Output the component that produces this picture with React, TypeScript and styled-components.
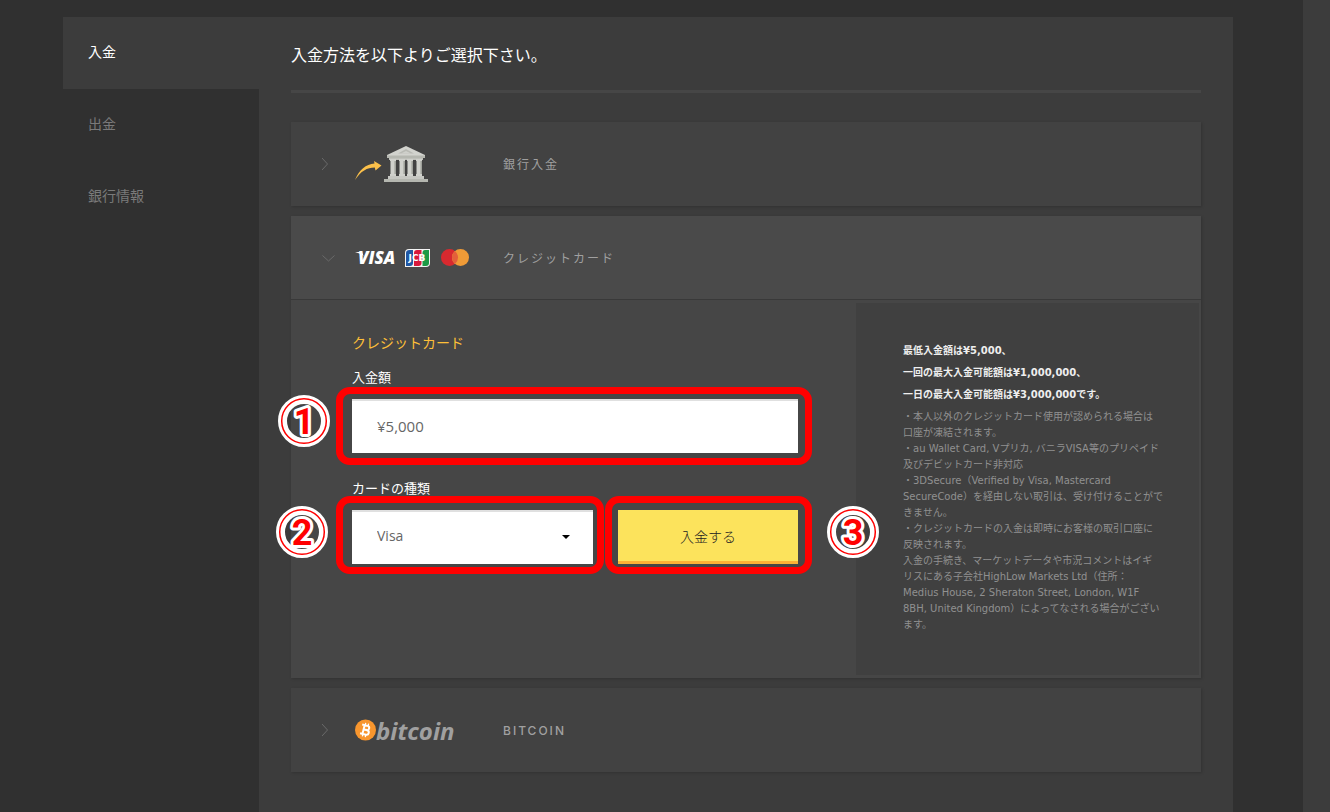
import React from 'react';
import styled, { createGlobalStyle } from 'styled-components';

const jp = `"DejaVu Sans", "Noto Sans CJK JP", sans-serif`;
const ui = `"Open Sans", "Noto Sans CJK JP", sans-serif`;

const GlobalStyle = createGlobalStyle`
  *, *::before, *::after { box-sizing: border-box; }
  body { margin: 0; background: #303030; font-family: ${ui}; color: #fff; }
  h1, h2, p, ul { margin: 0; padding: 0; }
`;

const Page = styled.div`
  display: flex;
  min-height: 100vh;
`;

const Main = styled.div`
  flex: 1;
  display: flex;
  padding: 17px 70px 0 63px;
`;

const EdgeStrip = styled.div`
  width: 27px;
  background: #3c3c3c;
`;

const SideNav = styled.nav`
  flex: 0 0 196px;
  display: flex;
  flex-direction: column;
`;

const NavLink = styled.a<{ $active?: boolean }>`
  height: 72px;
  line-height: 70px;
  padding-left: 25px;
  font-size: 14px;
  text-decoration: none;
  color: ${(p) => (p.$active ? '#fff' : '#7a7a7a')};
  background: ${(p) => (p.$active ? '#3c3c3c' : 'transparent')};
`;

const Content = styled.main`
  flex: 1;
  min-width: 0;
  background: #3c3c3c;
  padding: 0 32px 40px;
`;

const Title = styled.h1`
  height: 76px;
  line-height: 76px;
  border-bottom: 3px solid #464646;
  margin-bottom: 29px;
  font-size: 16px;
  font-weight: 400;
`;

const Methods = styled.div`
  display: flex;
  flex-direction: column;
  gap: 10px;
`;

const Method = styled.section`
  background: #424242;
  box-shadow: 1px 1px 2px #333;
`;

const MethodHeader = styled.button<{ $open?: boolean }>`
  display: grid;
  grid-template-columns: 33px 148px 1fr;
  align-items: center;
  width: 100%;
  height: 84px;
  padding: 0 0 0 31px;
  border: 0;
  border-bottom: ${(p) => (p.$open ? '1px solid #393939' : '0')};
  background: ${(p) => (p.$open ? '#4a4a4a' : '#424242')};
  color: #a0a0a0;
  font-family: ${ui};
  text-align: left;
`;

const MethodName = styled.span<{ $latin?: boolean }>`
  font-family: ${(p) => (p.$latin ? 'Inter, sans-serif' : ui)};
  font-size: 12px;
  font-weight: ${(p) => (p.$latin ? 500 : 400)};
  letter-spacing: 2px;
`;

const Logos = styled.span`
  display: flex;
  align-items: center;
`;

const Details = styled.div`
  display: flex;
  justify-content: space-between;
  background: #464646;
  padding: 3px 2px 3px 61px;
`;

const Form = styled.form`
  flex: 0 1 446px;
  padding: 28px 0 0;
`;

const FormTitle = styled.h2`
  height: 24px;
  line-height: 24px;
  margin-bottom: 12px;
  font-size: 14px;
  font-weight: 400;
  color: #fdbf38;
`;

const Label = styled.label`
  display: block;
  height: 20px;
  line-height: 20px;
  margin-bottom: 12px;
  font-size: 13px;
`;

const Marked = styled.div<{ $inset: string }>`
  position: relative;
  &::after {
    content: '';
    position: absolute;
    inset: ${(p) => p.$inset};
    border: 7px solid #f00;
    border-radius: 14px;
    pointer-events: none;
  }
`;

const AmountField = styled(Marked)`
  margin-bottom: 25px;
`;

const FormRow = styled.div`
  display: flex;
  gap: 25px;
`;

const CardField = styled(Marked)`
  flex: 1;
`;

const SubmitField = styled(Marked)`
  flex: 0 0 180px;
`;

const AmountInput = styled.input`
  display: block;
  width: 100%;
  height: 54px;
  padding: 0 25px 2px;
  border: 0;
  border-top: 2px solid #e0e0e0;
  border-radius: 0;
  background: #fff;
  color: #666;
  font: 400 15px ${ui};
`;

const CardSelect = styled.select`
  appearance: none;
  display: block;
  width: 100%;
  height: 54px;
  padding: 0 25px 6px;
  border: 0;
  border-top: 2px solid #e0e0e0;
  border-radius: 0;
  background: #fff;
  color: #666;
  font: 400 14px ${ui};
`;

const Caret = styled.span`
  position: absolute;
  top: 25px;
  right: 23px;
  border: 4px solid transparent;
  border-top-color: #000;
  border-bottom: 0;
`;

const SubmitButton = styled.button`
  display: block;
  width: 100%;
  height: 54px;
  padding: 0;
  border: 0;
  border-bottom: 3px solid #fdb135;
  background: #fce35c;
  color: #222;
  font: 300 14px ${ui};
`;

const Badge = styled.svg<{ $left: number }>`
  position: absolute;
  top: -4px;
  left: ${(p) => p.$left}px;
  z-index: 1;
`;

const Notes = styled.aside`
  flex: 0 0 343px;
  min-height: 372px;
  padding: 37px 0 37px 47px;
  background: #404040;
  font-family: ${jp};
  font-size: 10px;
  white-space: nowrap;
`;

const Limits = styled.div`
  margin-bottom: 3px;
`;

const Limit = styled.p`
  line-height: 22px;
  font-weight: 700;
  color: #eee;
`;

const Note = styled.p`
  line-height: 16px;
  color: #909090;
`;

const Chevron = ({ open }: { open?: boolean }) => (
  <svg width="14" height="14" viewBox="0 0 14 14" fill="none" stroke="#6a6a6a" aria-hidden="true">
    {open ? <path d="M.5 4.5l6 5.5 6-5.5" /> : <path d="M0 1l5.500 6L0 13" />}
  </svg>
);

const BankLogo = () => (
  <svg width="74" height="38" viewBox="0 0 74 38" aria-hidden="true">
    <path d="M0 35C4 25 11 19 19.500 18.500L19 16l7.500 4.500-6 5-.7-3C12 22.500 6 26 0 35z" fill="#fbc04a" />
    <path d="M51 1l19 9v3H32v-3z" fill="#d2d3ce" />
    <path d="M32 10.500h38v2.500H32z" fill="#b5b7b0" />
    <path d="M51 4l8 4.500H43z" fill="#b9bab4" />
    <path d="M51 6l5 2.500H46z" fill="#cfd0cb" />
    <path d="M34 13h34v2H34z" fill="#bfc0ba" />
    {[35, 44, 52, 61].map((x) => (
      <g key={x}>
        <path d={`M${x} 14h6v2h-6zM${x + 0.5} 16h5v13h-5zM${x} 29h6v2h-6z`} fill="#d0d1cc" />
        <path d={`M${x + 4} 16h1.500v13h-1.500z`} fill="#b5b7b0" />
      </g>
    ))}
    <path d="M33 31h36v3H33z" fill="#c6c7c2" />
    <path d="M29 34h44v3H29z" fill="#b5b7b0" />
  </svg>
);

const CardLogos = () => (
  <svg width="116" height="22" viewBox="0 0 116 22" aria-label="VISA JCB Mastercard">
    <text x="3" y="17" fill="#fff" fontFamily="Open Sans" fontSize="17" fontWeight="800" fontStyle="italic">VISA</text>
    <path d="M0 5h7l1.500 4C6 7 3 5.800 0 5z" fill="#fff" />
    <path d="M54 2h21v14q0 4-4 4H50V6q0-4 4-4z" fill="#f4f4f4" />
    <path d="M54.500 3H58v13q0 3-3 3h-4V6q0-3 3.500-3z" fill="#1f58a5" />
    <path d="M62 3h4.500v13q0 3-3 3H59V6q0-3 3-3z" fill="#d8183c" />
    <path d="M70 3h4v13q0 3-3 3h-3.500V6q0-3 2.500-3z" fill="#1c9a45" />
    <text x="62" y="14" fill="#fff" textAnchor="middle" fontFamily="DejaVu Sans" fontSize="9" fontWeight="700">JCB</text>
    <circle cx="94.500" cy="10.500" r="8.500" fill="#d8292f" />
    <circle cx="105.500" cy="10.500" r="8.500" fill="#f09b37" />
    <path d="M100 4a8.500 8.500 0 0 1 0 13 8.500 8.500 0 0 1 0-13z" fill="#e4603a" />
  </svg>
);

const BitcoinLogo = () => (
  <svg width="112" height="40" viewBox="0 -6 112 40" aria-label="bitcoin">
    <circle cx="10.500" cy="14" r="10.500" fill="#f8962e" />
    <g transform="rotate(14 10.500 14)" fill="none" stroke="#fff" strokeWidth="2">
      <path d="M6 9.500h5.500a2 2 0 0 1 0 4.300H8.500M8.500 13.800h3.500a2.300 2.300 0 0 1 0 4.700H6M8.500 9.500v9" />
      <path d="M9 7v2.500M12 7v2.500M9 18.500V21M12 18.500V21" strokeWidth="1.300" />
    </g>
    <text x="21" y="24" fill="#a0a0a0" fontFamily="Open Sans" fontSize="24" fontWeight="700" fontStyle="italic">bitcoin</text>
  </svg>
);

const StepBadge = ({ n, left }: { n: number; left: number }) => (
  <Badge $left={left} width="52" height="52" viewBox="0 0 52 52">
    <circle cx="26" cy="26" r="21.500" fill="none" stroke="#fff" strokeWidth="9" />
    <circle cx="26" cy="26" r="22.300" fill="none" stroke="#f00" strokeWidth="1.500" />
    <text
      x="26"
      y="39"
      textAnchor="middle"
      fontFamily="Roboto, sans-serif"
      fontSize="36"
      fontWeight="700"
      fill="#f00"
      stroke="#fff"
      strokeWidth="6"
      strokeLinejoin="round"
      paintOrder="stroke"
    >
      {n}
    </text>
  </Badge>
);

export default function App() {
  return (
    <Page>
      <GlobalStyle />
      <Main>
        <SideNav>
          <NavLink href="#deposit" $active>入金</NavLink>
          <NavLink href="#withdraw">出金</NavLink>
          <NavLink href="#bank">銀行情報</NavLink>
        </SideNav>
        <Content>
          <Title>入金方法を以下よりご選択下さい。</Title>
          <Methods>
            <Method>
              <MethodHeader type="button">
                <Chevron />
                <Logos><BankLogo /></Logos>
                <MethodName>銀行入金</MethodName>
              </MethodHeader>
            </Method>
            <Method>
              <MethodHeader type="button" $open>
                <Chevron open />
                <Logos><CardLogos /></Logos>
                <MethodName>クレジットカード</MethodName>
              </MethodHeader>
              <Details>
                <Form onSubmit={(e) => e.preventDefault()}>
                  <FormTitle>クレジットカード</FormTitle>
                  <Label htmlFor="amount">入金額</Label>
                  <AmountField $inset="-12px -14px -12px -16px">
                    <AmountInput id="amount" type="text" defaultValue="¥5,000" />
                    <StepBadge n={1} left={-74} />
                  </AmountField>
                  <Label htmlFor="card">カードの種類</Label>
                  <FormRow>
                    <CardField $inset="-14px -11px -10px -16px">
                      <CardSelect id="card" defaultValue="Visa">
                        <option>Visa</option>
                        <option>JCB</option>
                        <option>Mastercard</option>
                      </CardSelect>
                      <Caret />
                      <StepBadge n={2} left={-76} />
                    </CardField>
                    <SubmitField $inset="-14px -14px -10px -13px">
                      <SubmitButton type="submit">入金する</SubmitButton>
                      <StepBadge n={3} left={209} />
                    </SubmitField>
                  </FormRow>
                </Form>
                <Notes>
                  <Limits>
                    <Limit>最低入金額は¥5,000、</Limit>
                    <Limit>一回の最大入金可能額は¥1,000,000、</Limit>
                    <Limit>一日の最大入金可能額は¥3,000,000です。</Limit>
                  </Limits>
                  <Note>・本人以外のクレジットカード使用が認められる場合は<br />口座が凍結されます。</Note>
                  <Note>・au Wallet Card, Vプリカ, バニラVISA等のプリペイド<br />及びデビットカード非対応</Note>
                  <Note>・3DSecure（Verified by Visa, Mastercard<br />SecureCode）を経由しない取引は、受け付けることがで<br />きません。</Note>
                  <Note>・クレジットカードの入金は即時にお客様の取引口座に<br />反映されます。</Note>
                  <Note>
                    入金の手続き、マーケットデータや市況コメントはイギ<br />リスにある子会社HighLow Markets Ltd（住所：<br />
                    Medius House, 2 Sheraton Street, London, W1F<br />8BH, United Kingdom）によってなされる場合がござい<br />ます。
                  </Note>
                </Notes>
              </Details>
            </Method>
            <Method>
              <MethodHeader type="button">
                <Chevron />
                <Logos><BitcoinLogo /></Logos>
                <MethodName $latin>BITCOIN</MethodName>
              </MethodHeader>
            </Method>
          </Methods>
        </Content>
      </Main>
      <EdgeStrip />
    </Page>
  );
}
